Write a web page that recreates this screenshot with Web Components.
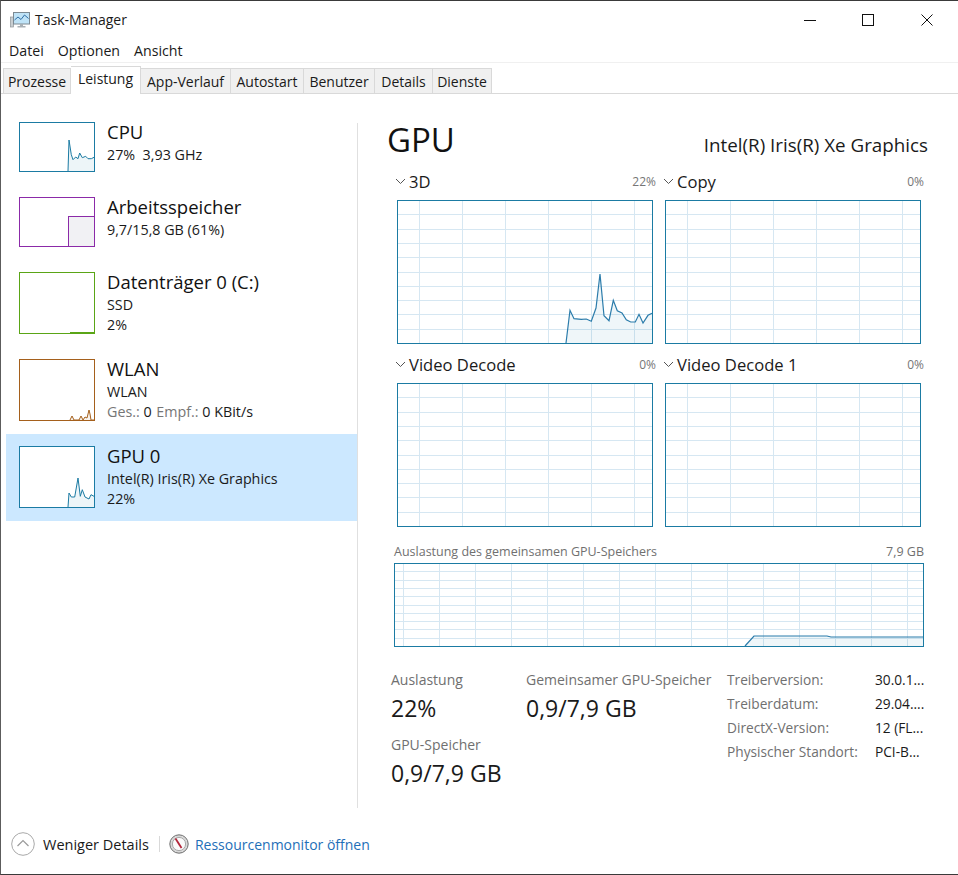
<!DOCTYPE html>
<html lang="de">
<head>
<meta charset="utf-8">
<title>Task-Manager</title>
<style>
    html, body { margin: 0; padding: 0; background: #fff; }
    body { font-family: "Open Sans", "Noto Sans", sans-serif; color: #1a1a1a; }
    gpu-panel .big { font-size: 33px; color: #111; }
    gpu-panel .model { font-size: 18.8px; color: #1a1a1a; }
    info-list .k { color: #707070; }
    menu-bar span { display: block; }
</style>
</head>
<body>
<task-window>
    <title-bar slot="top">Task-Manager</title-bar>
    <menu-bar slot="top"><span>Datei</span><span>Optionen</span><span>Ansicht</span></menu-bar>
    <tab-strip slot="top">
        <tab-item w="68">Prozesse</tab-item>
        <tab-item w="70" active>Leistung</tab-item>
        <tab-item w="90">App-Verlauf</tab-item>
        <tab-item w="73">Autostart</tab-item>
        <tab-item w="71">Benutzer</tab-item>
        <tab-item w="58">Details</tab-item>
        <tab-item w="59">Dienste</tab-item>
    </tab-strip>

    <perf-sidebar slot="side">
        <perf-item name="CPU" color="#1b7ba3" h="50" pts="49,49 50,18 52.3,32.7 54,37.7 56.7,35 59,36.7 60.7,31 63.3,35.7 66.7,34.3 69,36.7 72.3,36.7 75,35.3">
            <div>27%&nbsp; 3,93 GHz</div>
        </perf-item>
        <perf-item name="Arbeitsspeicher" color="#8b2aa8" h="50" block="49,19">
            <div>9,7/15,8 GB (61%)</div>
        </perf-item>
        <perf-item name="Datenträger 0 (C:)" color="#5aa516" h="62" pts="51,60.5 75,60.5">
            <div>SSD</div><div>2%</div>
        </perf-item>
        <perf-item name="WLAN" color="#a5601c" h="62" pts="51,61 53,57 55,61 60,61 62,57 64,61 66,58 68,59 70,51 71,55 72,61 75,61">
            <div>WLAN</div>
            <div><span style="color:#767676">Ges.:</span> 0 <span style="color:#767676;margin-left:1px">Empf.:</span> 0 KBit/s</div>
        </perf-item>
        <perf-item name="GPU 0" color="#1b7ba3" h="62" selected pts="49,61 50,47 52.3,51 55.7,51 59,32 61.3,50.3 63.3,43.7 66,51 70,53 72,48.7 75,50.3">
            <div>Intel(R) Iris(R) Xe Graphics</div><div>22%</div>
        </perf-item>
    </perf-sidebar>

    <gpu-panel slot="main">
        <div class="head" slot="head"><span class="big">GPU</span><span class="model">Intel(R) Iris(R) Xe Graphics</span></div>
        <engine-graph slot="graphs" name="3D" value="22%" pts="169,143 173,110.3 177,118.7 184.3,119.3 189.3,119 194.3,121.3 199,108 203,74 207,115.7 212,120.7 216.3,100.3 220.3,110.7 225,113 229.3,119.7 233.7,122 238.3,122 242,114.3 246,123 251,115.3 255,113.3"></engine-graph>
        <engine-graph slot="graphs" name="Copy" value="0%"></engine-graph>
        <engine-graph slot="graphs" name="Video Decode" value="0%"></engine-graph>
        <engine-graph slot="graphs" name="Video Decode 1" value="0%"></engine-graph>
        <memory-graph slot="memory"></memory-graph>
        <stat-block slot="col1" label="Auslastung" value="22%"></stat-block>
        <stat-block slot="col1" label="GPU-Speicher" value="0,9/7,9 GB"></stat-block>
        <stat-block slot="col2" label="Gemeinsamer GPU-Speicher" value="0,9/7,9 GB"></stat-block>
        <info-list slot="col3">
            <span class="k">Treiberversion:</span><span>30.0.1...</span>
            <span class="k">Treiberdatum:</span><span>29.04....</span>
            <span class="k">DirectX-Version:</span><span>12 (FL...</span>
            <span class="k">Physischer Standort:</span><span>PCI-B...</span>
        </info-list>
    </gpu-panel>

    <footer-bar slot="bottom"></footer-bar>
</task-window>

<script>
const taskWindowTemplate = document.createElement('template');
taskWindowTemplate.innerHTML = `
    <style>
        :host {
            display: flex;
            flex-direction: column;
            box-sizing: border-box;
            width: 958px;
            height: 875px;
            border-top: 1px solid #3a3a3a;
            border-left: 1px solid #5c5c5c;
            border-bottom: 1px solid #3a3a3a;
            background: #fff;
            overflow: hidden;
        }
        .body { display: flex; flex: 1; min-height: 0; }
    </style>
    <slot name="top"></slot>
    <div class="body">
        <slot name="side"></slot>
        <slot name="main"></slot>
    </div>
    <slot name="bottom"></slot>
`;
class TaskWindow extends HTMLElement {
    constructor() {
        super();
        this.attachShadow({ mode: 'open' }).appendChild(taskWindowTemplate.content.cloneNode(true));
    }
}
customElements.define('task-window', TaskWindow);

const titleBarTemplate = document.createElement('template');
titleBarTemplate.innerHTML = `
    <style>
        :host {
            display: flex;
            align-items: center;
            height: 37px;
            font-size: 14px;
            color: #1a1a1a;
        }
        .icon { margin-left: 9px; margin-right: 5px; flex: none; }
        .title { flex: 1; }
        .ctl { width: 58.5px; height: 37px; display: flex; align-items: center; justify-content: center; }
        .ctls { display: flex; margin-right: 2px; }
    </style>
    <svg class="icon" width="20" height="18" viewBox="0 0 20 18">
        <rect x="0.5" y="6" width="3" height="10" fill="#c9ced1" stroke="#8f9599" stroke-width=".7"/>
        <rect x="3.5" y="1.5" width="16" height="11.5" fill="#bfe3f7" stroke="#7c8a93"/>
        <path d="M4.5 9 L8 6 L11 8.5 L14.5 4 L18.5 7.5" fill="none" stroke="#2f6ea5" stroke-width="1"/>
        <path d="M10 13 h3 v2 h2.5 v1.5 h-8 V15 H10 Z" fill="#a9b0b5"/>
    </svg>
    <span class="title"><slot></slot></span>
    <div class="ctls">
        <div class="ctl"><svg width="12" height="12" viewBox="0 0 12 12"><path d="M0 6.5 H12" stroke="#111" fill="none"/></svg></div>
        <div class="ctl"><svg width="12" height="12" viewBox="0 0 12 12"><rect x=".5" y=".5" width="11" height="11" stroke="#111" fill="none"/></svg></div>
        <div class="ctl"><svg width="12" height="12" viewBox="0 0 12 12"><path d="M.5 .5 L11.5 11.5 M11.5 .5 L.5 11.5" stroke="#111" fill="none"/></svg></div>
    </div>
`;
class TitleBar extends HTMLElement {
    constructor() {
        super();
        this.attachShadow({ mode: 'open' }).appendChild(titleBarTemplate.content.cloneNode(true));
    }
}
customElements.define('title-bar', TitleBar);

const menuBarTemplate = document.createElement('template');
menuBarTemplate.innerHTML = `
    <style>
        :host {
            display: flex;
            align-items: center;
            gap: 14px;
            height: 24px;
            padding-left: 8px;
            font-size: 14.2px;
            border-bottom: 1px solid #f0f0f0;
        }
    </style>
    <slot></slot>
`;
class MenuBar extends HTMLElement {
    constructor() {
        super();
        this.attachShadow({ mode: 'open' }).appendChild(menuBarTemplate.content.cloneNode(true));
    }
}
customElements.define('menu-bar', MenuBar);

const tabStripTemplate = document.createElement('template');
tabStripTemplate.innerHTML = `
    <style>
        :host {
            display: flex;
            align-items: flex-end;
            height: 30px;
            padding-left: 2px;
            border-bottom: 1px solid #d9d9d9;
            box-sizing: content-box;
        }
    </style>
    <slot></slot>
`;
class TabStrip extends HTMLElement {
    constructor() {
        super();
        this.attachShadow({ mode: 'open' }).appendChild(tabStripTemplate.content.cloneNode(true));
    }
}
customElements.define('tab-strip', TabStrip);

const tabItemTemplate = document.createElement('template');
tabItemTemplate.innerHTML = `
    <style>
        :host {
            display: flex;
            align-items: center;
            justify-content: center;
            box-sizing: border-box;
            height: 25px;
            font-size: 14px;
            background: #f0f0f0;
            border: 1px solid #d9d9d9;
            border-bottom: none;
            border-left: none;
            white-space: nowrap;
        }
        :host(:first-child) { border-left: 1px solid #d9d9d9; }
        :host([active]) {
            height: 28px;
            margin-bottom: -1px;
            background: #fff;
            padding-bottom: 4px;
            position: relative;
        }
    </style>
    <slot></slot>
`;
class TabItem extends HTMLElement {
    constructor() {
        super();
        this.attachShadow({ mode: 'open' }).appendChild(tabItemTemplate.content.cloneNode(true));
        this.style.width = this.getAttribute('w') + 'px';
    }
}
customElements.define('tab-item', TabItem);

const perfSidebarTemplate = document.createElement('template');
perfSidebarTemplate.innerHTML = `
    <style>
        :host {
            display: block;
            box-sizing: border-box;
            width: 356px;
            flex: none;
            padding: 16px 0 0 5px;
        }
    </style>
    <slot></slot>
`;
class PerfSidebar extends HTMLElement {
    constructor() {
        super();
        this.attachShadow({ mode: 'open' }).appendChild(perfSidebarTemplate.content.cloneNode(true));
    }
}
customElements.define('perf-sidebar', PerfSidebar);

const perfItemTemplate = document.createElement('template');
perfItemTemplate.innerHTML = `
    <style>
        :host {
            display: flex;
            gap: 12px;
            padding: 12px 0 13px 13px;
            font-size: 14.3px;
            line-height: 20px;
        }
        :host([selected]) { background: #cce8ff; }
        svg { flex: none; display: block; background: #fff; }
        .name { font-size: 18.5px; line-height: 22px; margin-bottom: 2px; color: #111; }
        .text { margin-top: -1px; margin-bottom: -6px; }
    </style>
    <svg></svg>
    <div class="text"><div class="name"></div><slot></slot></div>
`;
class PerfItem extends HTMLElement {
    constructor() {
        super();
        this.attachShadow({ mode: 'open' }).appendChild(perfItemTemplate.content.cloneNode(true));
    }
    connectedCallback() {
        const h = +this.getAttribute('h');
        const color = this.getAttribute('color');
        const pts = this.getAttribute('pts');
        const block = this.getAttribute('block');
        this.shadowRoot.querySelector('.name').textContent = this.getAttribute('name');
        const svg = this.shadowRoot.querySelector('svg');
        svg.setAttribute('width', 76);
        svg.setAttribute('height', h);
        svg.setAttribute('viewBox', `0 0 76 ${h}`);
        let inner = '';
        if (block) {
            const [x, y] = block.split(',').map(Number);
            inner += `<rect x="${x + .5}" y="${y + .5}" width="${75 - x}" height="${h - y - 1}" fill="#f1f1f4" stroke="${color}"/>`;
        }
        if (pts) {
            const p = pts.split(' ');
            const startX = p[0].split(',')[0];
            const endX = p[p.length - 1].split(',')[0];
            inner += `<polygon points="${startX},${h} ${pts} ${endX},${h}" fill="${color}" opacity=".08"/>`;
            inner += `<polyline points="${pts}" fill="none" stroke="${color}" stroke-width="1"/>`;
        }
        inner += `<rect x=".5" y=".5" width="75" height="${h - 1}" fill="none" stroke="${color}"/>`;
        svg.innerHTML = inner;
    }
}
customElements.define('perf-item', PerfItem);

// draws the boxed history chart, used by the four engines and the shared memory one
class HistoryChart extends HTMLElement {
    constructor() {
        super();
        this.attachShadow({ mode: 'open' });
        this.shadowRoot.innerHTML = `<style>:host { display: block; line-height: 0; }</style><svg></svg>`;
    }
    connectedCallback() {
        const w = +this.getAttribute('w');
        const h = +this.getAttribute('h');
        const stepX = +this.getAttribute('step-x');
        const startX = +this.getAttribute('start-x');
        const pts = this.getAttribute('pts');
        const svg = this.shadowRoot.querySelector('svg');
        svg.setAttribute('width', w);
        svg.setAttribute('height', h);
        svg.setAttribute('viewBox', `0 0 ${w} ${h}`);
        let inner = '';
        for (let x = startX; x < w - 1; x += stepX) {
            inner += `<path d="M${x + .5} 1 V${h - 1}" stroke="#d6e7f2" fill="none"/>`;
        }
        for (let i = 1; i < 10; i++) {
            const y = Math.round((h - 1) * i / 10) + .5;
            inner += `<path d="M1 ${y} H${w - 1}" stroke="#d6e7f2" fill="none"/>`;
        }
        if (pts) {
            const p = pts.split(' ');
            const first = p[0].split(',')[0];
            const last = p[p.length - 1].split(',')[0];
            inner += `<polygon points="${first},${h} ${pts} ${last},${h}" fill="#1b7ba3" opacity=".07"/>`;
            inner += `<polyline points="${pts}" fill="none" stroke="#2b7cab" stroke-width="1.2"/>`;
        }
        inner += `<rect x=".5" y=".5" width="${w - 1}" height="${h - 1}" fill="none" stroke="#1b7ba3"/>`;
        svg.innerHTML = inner;
    }
}
customElements.define('history-chart', HistoryChart);

const engineGraphTemplate = document.createElement('template');
engineGraphTemplate.innerHTML = `
    <style>
        :host { display: block; width: 259px; height: 183px; }
        .label {
            display: flex;
            align-items: center;
            height: 18px;
            padding-bottom: 2px;
            margin-bottom: 8px;
            font-size: 16.6px;
        }
        svg { margin-right: 3px; margin-left: -2px; flex: none; }
        .name { flex: 1; color: #1a1a1a; }
        .value { font-size: 12px; color: #767676; }
    </style>
    <div class="label">
        <svg width="11" height="7" viewBox="0 0 11 7"><path d="M1 1 L5.5 5.5 L10 1" fill="none" stroke="#555"/></svg>
        <span class="name"></span><span class="value"></span>
    </div>
    <history-chart w="256" h="144" step-x="43" start-x="22"></history-chart>
`;
class EngineGraph extends HTMLElement {
    constructor() {
        super();
        this.attachShadow({ mode: 'open' }).appendChild(engineGraphTemplate.content.cloneNode(true));
    }
    connectedCallback() {
        this.shadowRoot.querySelector('.name').textContent = this.getAttribute('name');
        this.shadowRoot.querySelector('.value').textContent = this.getAttribute('value');
        const pts = this.getAttribute('pts');
        const chart = this.shadowRoot.querySelector('history-chart');
        if (pts) {
            chart.setAttribute('pts', pts);
            chart.connectedCallback();
        }
    }
}
customElements.define('engine-graph', EngineGraph);

const memoryGraphTemplate = document.createElement('template');
memoryGraphTemplate.innerHTML = `
    <style>
        :host { display: block; width: 530px; }
        .label {
            display: flex;
            justify-content: space-between;
            height: 19px;
            line-height: 15px;
            font-size: 12.5px;
            color: #707070;
        }
    </style>
    <div class="label"><span>Auslastung des gemeinsamen GPU-Speichers</span><span>7,9 GB</span></div>
    <history-chart w="530" h="84" step-x="36" start-x="9" pts="351,83 360,73 433,73 437,74 530,74"></history-chart>
`;
class MemoryGraph extends HTMLElement {
    constructor() {
        super();
        this.attachShadow({ mode: 'open' }).appendChild(memoryGraphTemplate.content.cloneNode(true));
    }
}
customElements.define('memory-graph', MemoryGraph);

const statBlockTemplate = document.createElement('template');
statBlockTemplate.innerHTML = `
    <style>
        :host { display: block; margin-bottom: 7px; white-space: nowrap; }
        .label { font-size: 14px; line-height: 25px; color: #707070; }
        .value { font-size: 23px; line-height: 33px; color: #1a1a1a; }
    </style>
    <div class="label"></div><div class="value"></div>
`;
class StatBlock extends HTMLElement {
    constructor() {
        super();
        this.attachShadow({ mode: 'open' }).appendChild(statBlockTemplate.content.cloneNode(true));
    }
    connectedCallback() {
        this.shadowRoot.querySelector('.label').textContent = this.getAttribute('label');
        this.shadowRoot.querySelector('.value').textContent = this.getAttribute('value');
    }
}
customElements.define('stat-block', StatBlock);

const infoListTemplate = document.createElement('template');
infoListTemplate.innerHTML = `
    <style>
        :host {
            display: grid;
            grid-template-columns: 148px auto;
            grid-auto-rows: 24px;
            align-items: center;
            font-size: 13.7px;
            color: #1a1a1a;
            white-space: nowrap;
        }
        ::slotted(.k) { color: #707070; }
    </style>
    <slot></slot>
`;
class InfoList extends HTMLElement {
    constructor() {
        super();
        this.attachShadow({ mode: 'open' }).appendChild(infoListTemplate.content.cloneNode(true));
    }
}
customElements.define('info-list', InfoList);

const gpuPanelTemplate = document.createElement('template');
gpuPanelTemplate.innerHTML = `
    <style>
        :host {
            display: block;
            flex: 1;
            min-width: 0;
            box-sizing: border-box;
            padding-top: 26px;
        }
        .rule { border-left: 1px solid #e0e0e0; height: 685px; margin-top: 29px; width: 0; }
        .wrap { display: flex; }
        .rule-col { flex: none; width: 1px; margin-top: -26px; }
        .content { flex: 1; min-width: 0; }
        ::slotted(.head) {
            display: flex;
            justify-content: space-between;
            align-items: baseline;
            height: 52px;
            margin-top: -3px;
            padding-bottom: 3px;
            margin-left: 29px;
            margin-right: 30px;
        }
        .graphs {
            display: grid;
            grid-template-columns: 259px 259px;
            column-gap: 9px;
            margin-left: 39px;
        }
        .memory { margin-left: 36px; margin-top: 6px; }
        .stats { display: flex; margin-left: 33px; margin-top: 20px; }
        .col1 { width: 135px; flex: none; }
        .col2 { width: 201px; flex: none; }
    </style>
    <div class="wrap">
        <div class="rule-col"><div class="rule"></div></div>
        <div class="content">
            <slot name="head"></slot>
            <div class="graphs"><slot name="graphs"></slot></div>
            <div class="memory"><slot name="memory"></slot></div>
            <div class="stats">
                <div class="col1"><slot name="col1"></slot></div>
                <div class="col2"><slot name="col2"></slot></div>
                <div class="col3"><slot name="col3"></slot></div>
            </div>
        </div>
    </div>
`;
class GpuPanel extends HTMLElement {
    constructor() {
        super();
        this.attachShadow({ mode: 'open' }).appendChild(gpuPanelTemplate.content.cloneNode(true));
    }
}
customElements.define('gpu-panel', GpuPanel);

const footerBarTemplate = document.createElement('template');
footerBarTemplate.innerHTML = `
    <style>
        :host {
            display: flex;
            align-items: center;
            height: 50px;
            padding: 0 0 5px 10px;
            font-size: 14.5px;
            flex: none;
        }
        .less { margin-left: 8px; color: #1a1a1a; }
        .sep { width: 1px; height: 16px; background: #d9d9d9; margin: 0 10px; }
        a { color: #1e6fb8; text-decoration: none; margin-left: 6px; font-size: 14px; }
        svg.monitor { margin-left: -1px; }
    </style>
    <svg width="24" height="24" viewBox="0 0 24 24">
        <circle cx="12" cy="12" r="11.3" fill="#fff" stroke="#a9a9a9"/>
        <path d="M6.5 14 L12 8.5 L17.5 14" fill="none" stroke="#9a9a9a" stroke-width="1.2"/>
    </svg>
    <span class="less">Weniger Details</span>
    <span class="sep"></span>
    <svg class="monitor" width="20" height="20" viewBox="0 0 20 20">
        <circle cx="10" cy="10" r="9.2" fill="#d8d8d8" stroke="#6f6f6f"/>
        <circle cx="10" cy="10" r="6.6" fill="#fafafa" stroke="#a8a8a8"/>
        <path d="M6.5 4.5 L12.5 14" stroke="#b3263a" stroke-width="1.8" fill="none"/>
    </svg>
    <a href="#">Ressourcenmonitor öffnen</a>
`;
class FooterBar extends HTMLElement {
    constructor() {
        super();
        this.attachShadow({ mode: 'open' }).appendChild(footerBarTemplate.content.cloneNode(true));
    }
}
customElements.define('footer-bar', FooterBar);
</script>
</body>
</html>
